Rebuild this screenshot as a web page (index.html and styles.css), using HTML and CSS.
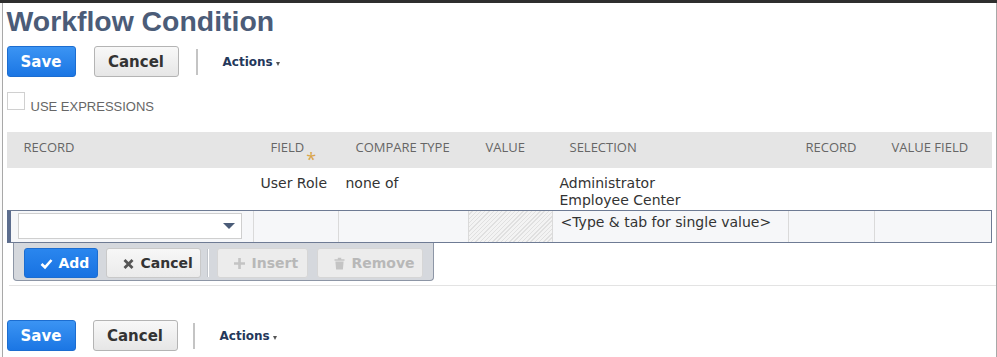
FILE: index.html
```html
<!DOCTYPE html>
<html lang="en">
<head>
    <meta charset="UTF-8">
    <title>Workflow Condition</title>
    <link rel="stylesheet" href="styles.css">
</head>
<body>
    <div class="window">
        <div class="edge-left"></div>

        <div class="page">
            <h1 class="title">Workflow Condition</h1>

            <div class="toolbar">
                <button class="btn btn-primary">Save</button>
                <button class="btn btn-default">Cancel</button>
                <span class="toolbar-sep"></span>
                <span class="actions">Actions <i class="caret"></i></span>
            </div>

            <label class="expr">
                <span class="checkbox"></span>
                <span class="expr-label">USE EXPRESSIONS</span>
            </label>

            <div class="grid">
                <div class="row head">
                    <div class="cell">RECORD</div>
                    <div class="cell">FIELD<span class="required">*</span></div>
                    <div class="cell">COMPARE TYPE</div>
                    <div class="cell">VALUE</div>
                    <div class="cell">SELECTION</div>
                    <div class="cell">RECORD</div>
                    <div class="cell">VALUE FIELD</div>
                </div>

                <div class="row data">
                    <div class="cell"></div>
                    <div class="cell">User Role</div>
                    <div class="cell">none of</div>
                    <div class="cell"></div>
                    <div class="cell">Administrator<br>Employee Center</div>
                    <div class="cell"></div>
                    <div class="cell"></div>
                </div>

                <div class="row edit">
                    <div class="cell">
                        <div class="dropdown"><i class="dropdown-arrow"></i></div>
                    </div>
                    <div class="cell"></div>
                    <div class="cell"></div>
                    <div class="cell hatched"></div>
                    <div class="cell">&lt;Type &amp; tab for single value&gt;</div>
                    <div class="cell"></div>
                    <div class="cell"></div>
                </div>

                <div class="edit-bar">
                    <button class="mini mini-primary">
                        <svg class="ico" viewBox="0 0 13 13"><path d="M1.5 7 L5 10.3 L11.5 3" fill="none" stroke="#fff" stroke-width="2.6"/></svg>
                        Add
                    </button>
                    <button class="mini">
                        <svg class="ico" viewBox="0 0 13 13"><path d="M2.5 3 L10.5 11 M10.5 3 L2.5 11" fill="none" stroke="#555" stroke-width="2.8"/></svg>
                        Cancel
                    </button>
                    <span class="bar-sep"></span>
                    <button class="mini mini-off">
                        <svg class="ico" viewBox="0 0 13 13"><path d="M6.5 1 V12 M1 6.5 H12" fill="none" stroke="#c4c4c4" stroke-width="2.6"/></svg>
                        Insert
                    </button>
                    <button class="mini mini-off">
                        <svg class="ico" viewBox="0 0 13 13"><path d="M1.5 2.2 H11.5 V3.8 H1.5 Z M4.8 0.8 H8.2 V2.2 H4.8 Z M2.4 4.6 H10.6 L9.9 12.6 H3.1 Z" fill="#c4c4c4"/></svg>
                        Remove
                    </button>
                </div>
            </div>

            <div class="rule"></div>

            <div class="toolbar bottom">
                <button class="btn btn-primary">Save</button>
                <button class="btn btn-default">Cancel</button>
                <span class="toolbar-sep"></span>
                <span class="actions">Actions <i class="caret"></i></span>
            </div>
        </div>

        <div class="edge-right"></div>
    </div>
</body>
</html>
```

FILE: styles.css
```css
* {
    margin: 0;
    padding: 0;
    box-sizing: border-box;
}

body {
    background: #fff;
    font-family: "DejaVu Sans", Verdana, sans-serif;
    color: #333;
}

.window {
    display: flex;
    width: 997px;
    height: 357px;
    border-top: 3px solid #2e2e2e;
    overflow: hidden;
}

.edge-left {
    width: 4px;
    border-right: 1px solid #a8a8a8;
    background: #fafafa;
}

.edge-right {
    width: 2px;
    border-left: 1px solid #a8a8a8;
}

.page {
    flex: 1;
    padding-left: 4px;
}

/* 标题 */
.title {
    font-family: "Liberation Sans", Arial, sans-serif;
    font-size: 28.4px;
    line-height: 32px;
    font-weight: bold;
    color: #4b5c78;
    padding-top: 2px;
}

/* 工具栏 */
.toolbar {
    display: flex;
    align-items: center;
    margin-top: 9px;
    height: 31px;
}

.toolbar.bottom {
    margin-top: 34px;
}

.btn {
    height: 31px;
    padding: 0 13px;
    border-radius: 3px;
    font-family: "DejaVu Sans", Verdana, sans-serif;
    font-size: 15px;
    font-weight: bold;
    cursor: pointer;
}

.btn-primary {
    width: 69px;
    color: #fff;
    border: 1px solid #1c6dd0;
    background: linear-gradient(#3b94f3, #1b76e4);
}

.btn-default {
    width: 85px;
    margin-left: 18px;
    color: #333;
    border: 1px solid #b4b4b4;
    background: linear-gradient(#f8f8f8, #e6e6e6);
}

.bottom .btn-default {
    margin-left: 17px;
}

.toolbar-sep {
    width: 2px;
    height: 26px;
    margin-left: 17px;
    background: #c4c4c4;
}

.bottom .toolbar-sep {
    margin-left: 15px;
}

.actions {
    margin-left: 25px;
    font-size: 12px;
    font-weight: bold;
    color: #24385b;
    display: flex;
    align-items: center;
}

.caret {
    display: inline-block;
    margin-left: 3px;
    margin-top: 4px;
    border-left: 2.5px solid transparent;
    border-right: 2.5px solid transparent;
    border-top: 4px solid #555;
}

/* 表达式复选框 */
.expr {
    display: flex;
    align-items: flex-start;
    gap: 6px;
    margin-top: 15px;
    height: 18px;
}

.checkbox {
    width: 18px;
    height: 18px;
    border: 1px solid #d0d0d0;
    background: #fff;
}

.expr-label {
    font-family: "Liberation Sans", Arial, sans-serif;
    font-size: 13px;
    line-height: 15px;
    color: #666;
    padding-top: 7px;
}

/* 条件表格 */
.grid {
    margin-top: 22px;
    width: 985px;
}

.row {
    display: grid;
    grid-template-columns: 247px 85px 130px 84px 236px 86px 117px;
}

.head {
    height: 36px;
    background: #e5e5e5;
    font-family: "Open Sans", "DejaVu Sans", sans-serif;
    font-size: 13px;
    line-height: 18px;
    color: #666;
}

.head .cell {
    padding: 6px 0 0 17px;
    white-space: nowrap;
}

.required {
    display: inline-block;
    vertical-align: -14px;
    margin-left: 2px;
    color: #d9a44a;
    font-size: 18px;
    line-height: 10px;
}

.data {
    height: 42px;
    font-size: 14px;
    line-height: 17px;
    color: #333;
}

.data .cell {
    padding: 7px 0 0 7px;
    white-space: nowrap;
}

.edit {
    height: 33px;
    grid-template-columns: 243px 85px 130px 84px 236px 86px 117px;
    border-top: 1px solid #6e7b94;
    border-bottom: 1px solid #6e7b94;
    border-left: 4px solid #5c6d8e;
    border-right: 1px solid #6e7b94;
    background: #f6f7f9;
    font-size: 14px;
    line-height: 17px;
}

.edit .cell {
    border-right: 1px solid #dadada;
    padding: 3px 0 0 8px;
    white-space: nowrap;
}

.edit .cell:first-child {
    padding: 2px 11px 0 7px;
}

.edit .cell:last-child {
    border-right: none;
}

.edit .hatched {
    background: repeating-linear-gradient(135deg, #f3f3f3 0 2px, #e0e0e0 2px 3px);
}

.dropdown {
    height: 26px;
    border: 1px solid #cfcfcf;
    background: #fff;
    display: flex;
    justify-content: flex-end;
    align-items: center;
    padding-right: 6px;
}

.dropdown-arrow {
    border-left: 6px solid transparent;
    border-right: 6px solid transparent;
    border-top: 6px solid #4b5c78;
}

/* 编辑按钮栏 */
.edit-bar {
    display: flex;
    align-items: center;
    width: 421px;
    height: 38px;
    margin-left: 6px;
    padding: 3px 10px 0 10px;
    background: #d5d8dd;
    border: 1px solid #8d96a6;
    border-top: none;
    border-radius: 0 0 4px 4px;
}

.mini {
    display: flex;
    align-items: center;
    gap: 6px;
    height: 30px;
    padding: 0 9px 0 15px;
    margin-right: 8px;
    border: 1px solid #c9c9c9;
    border-radius: 3px;
    background: linear-gradient(#f7f7f7, #ebebeb);
    font-family: "DejaVu Sans", Verdana, sans-serif;
    font-size: 14px;
    font-weight: bold;
    color: #333;
}

.mini-primary {
    width: 74px;
    color: #fff;
    border-color: #1c6dd0;
    background: linear-gradient(#2a86ee, #1872e2);
}

.mini:nth-child(2) {
    width: 95px;
    margin-right: 6px;
}

.mini-off {
    color: #b8b8b8;
    border-color: #d6d6d6;
    background: #ececec;
}

.mini-off:nth-of-type(3) {
    width: 91px;
    margin-right: 9px;
}

.mini-off:last-child {
    width: 106px;
    margin-right: 0;
}

.ico {
    width: 13px;
    height: 13px;
    flex: none;
}

.bar-sep {
    width: 2px;
    height: 28px;
    margin-right: 8px;
    background: #fff;
    border-left: 1px solid #c0c4ca;
}

.rule {
    margin-top: 4px;
    margin-left: 2px;
    width: 987px;
    height: 1px;
    background: #e3e3e3;
}
```
